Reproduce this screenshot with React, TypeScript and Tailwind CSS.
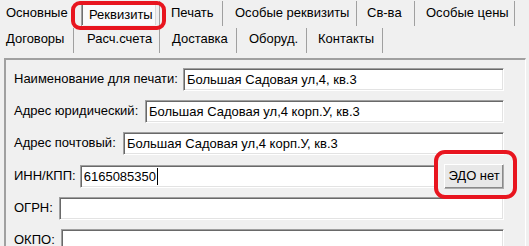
import React from "react";

const row1 = [
  { t: "Основные", w: 82, pl: 6 },
  { t: "Реквизиты", w: 78, pl: 6, sel: true },
  { t: "Печать", w: 63, pl: 11 },
  { t: "Особые реквизиты", w: 134, pl: 12 },
  { t: "Св-ва", w: 58, pl: 10 },
  { t: "Особые цены", w: 100, pl: 11 },
];
const row2 = [
  { t: "Договоры", w: 74, pl: 6 },
  { t: "Расч.счета", w: 86, pl: 13 },
  { t: "Доставка", w: 77, pl: 12 },
  { t: "Оборуд.", w: 70, pl: 12 },
  { t: "Контакты", w: 76, pl: 11 },
];

function Field({
  label,
  lw,
  value,
  cursor,
  children,
  inputClass,
}: {
  label: string;
  lw: number;
  value?: string;
  cursor?: boolean;
  children?: React.ReactNode;
  inputClass?: string;
}) {
  return (
    <div className="flex items-center h-[23px]">
      <div className="whitespace-nowrap pb-[3px]" style={{ width: lw }}>
        {label}
      </div>
      <div
        className={
          "h-[23px] bg-white border-t border-l border-[#a0a0a0] border-b border-r border-b-white border-r-white shadow-[inset_1px_1px_0_#696969,inset_-1px_-1px_0_#e3e3e3] flex items-center pl-[3px] whitespace-nowrap overflow-hidden " +
          (inputClass ?? "flex-1")
        }
      >
        <span>{value}</span>
        {cursor && <span className="inline-block w-[1px] h-[17px] bg-black ml-[1px]" />}
      </div>
      {children}
    </div>
  );
}

export default function App() {
  return (
    <div
      className="relative w-[529px] h-[246px] overflow-hidden bg-[#f0f0f0] text-black text-[13px] leading-none"
      style={{ fontFamily: '"Liberation Sans", Arial, sans-serif' }}
    >
      <div className="flex h-[27px]">
        {row1.map((tb) => (
          <div
            key={tb.t}
            className="flex-none h-[25px] mt-[1px] pb-[2px] flex items-center border-r border-[#a0a0a0] whitespace-nowrap"
            style={{ width: tb.w }}
          >
            {tb.sel ? (
              <div className="ml-[0px] w-[74px] h-[20px] mt-[4px] bg-[#fafafa] border-l border-[#707070] border-r border-r-[#d8d8d8] flex items-center pl-[6px] pb-[1px]">
                {tb.t}
              </div>
            ) : (
              <span style={{ paddingLeft: tb.pl }}>{tb.t}</span>
            )}
          </div>
        ))}
      </div>
      <div className="flex h-[26px]">
        {row2.map((tb) => (
          <div
            key={tb.t}
            className="flex-none h-[25px] mt-[1px] pb-[4px] flex items-center border-r border-[#a0a0a0] whitespace-nowrap"
            style={{ width: tb.w }}
          >
            <span style={{ paddingLeft: tb.pl }}>{tb.t}</span>
          </div>
        ))}
      </div>
      <div className="ml-[4px] mt-[5px] w-[522px] h-[200px] border-t-2 border-l-2 border-[#a0a0a0] border-r border-r-white pt-[8px] pl-[8px] pr-[21px] flex flex-col gap-[9px]">
        <Field label="Наименование для печати:" lw={169} value="Большая Садовая ул,4, кв.3" />
        <Field label="Адрес юридический:" lw={131} value="Большая Садовая ул,4 корп.У, кв.3" />
        <Field label="Адрес почтовый:" lw={109} value="Большая Садовая ул,4 корп.У, кв.3" />
        <div className="mt-[1px]">
          <Field
            label="ИНН/КПП:"
            lw={66}
            value="6165085350"
            cursor
            inputClass="w-[360px] h-[22px]"
          >
            <div className="ml-[6px] w-[60px] h-[25px] mt-[-1px] bg-[#e8e8e8] border border-[#adadad] border-t-white border-l-white shadow-[inset_-1px_-1px_0_#8a8a8a] flex items-center justify-center pb-[1px]">
              ЭДО нет
            </div>
          </Field>
        </div>
        <Field label="ОГРН:" lw={45} />
        <Field label="ОКПО:" lw={47} />
      </div>

      <div className="absolute left-[71px] top-[1px] w-[95px] h-[29px] border-[4px] border-[#e8151f] rounded-[9px]" />
      <div className="absolute left-[434px] top-[150px] w-[83px] h-[49px] border-[4px] border-[#e8151f] rounded-[11px]" />
    </div>
  );
}
